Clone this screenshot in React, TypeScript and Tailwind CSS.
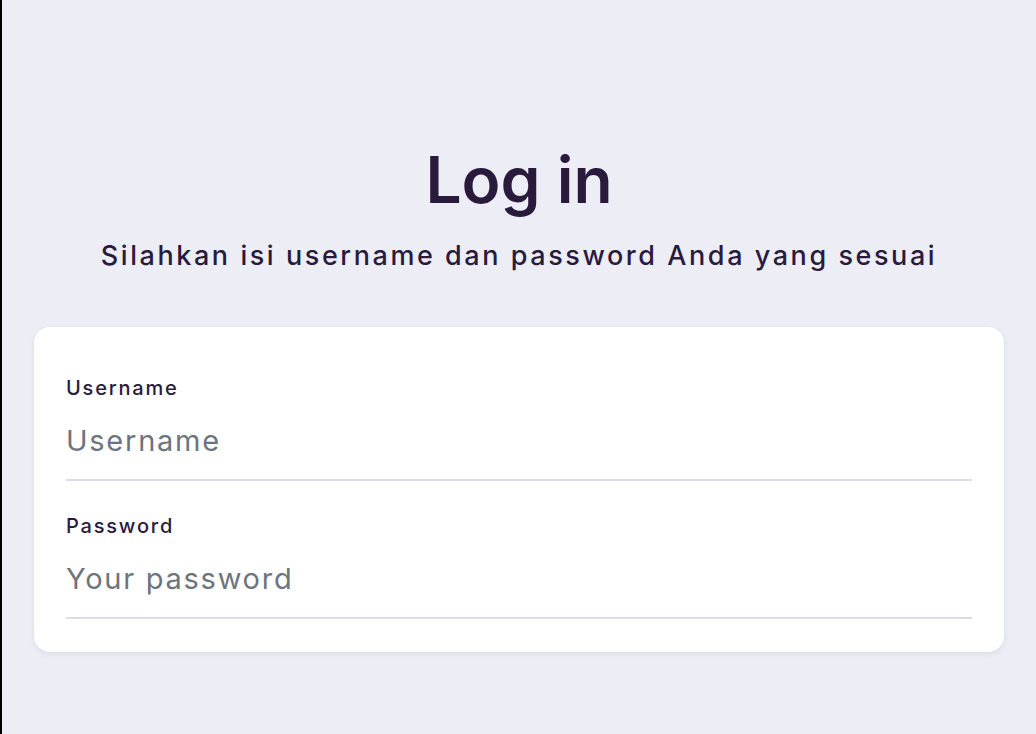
import { useState } from "react";

function Field({ label, placeholder, type = "text" }: { label: string; placeholder: string; type?: string }) {
  const [value, setValue] = useState("");
  return (
    <div className="flex flex-col">
      <label className="h-7 text-[20px] leading-7 font-medium tracking-[0.09em] text-[#2a1b3d]">{label}</label>
      <input
        type={type}
        value={value}
        onChange={(e) => setValue(e.target.value)}
        placeholder={placeholder}
        className="h-[79px] w-full border-b-2 border-[#dddbe8] bg-transparent text-[29px] tracking-[0.06em] text-[#2a1b3d] placeholder:text-[#6c757d] focus:outline-none"
      />
    </div>
  );
}

export default function App() {
  return (
    <div className="min-h-screen border-l-2 border-black bg-[#edeef5] px-8 pt-[142px] font-['Inter','Noto_Sans',sans-serif] text-[#2a1b3d]">
      <h1 className="text-center text-[64px] leading-[76px] font-semibold">Log in</h1>
      <p className="mt-[20px] text-center text-[27px] leading-9 font-medium tracking-[0.095em]">
        Silahkan isi username dan password Anda yang sesuai
      </p>
      <form className="mt-[53px] flex flex-col gap-[31px] rounded-2xl bg-white px-8 pt-[47px] pb-[33px] shadow-[0_2px_6px_rgba(0,0,0,0.08)]">
        <Field label="Username" placeholder="Username" />
        <Field label="Password" placeholder="Your password" type="password" />
      </form>
    </div>
  );
}
